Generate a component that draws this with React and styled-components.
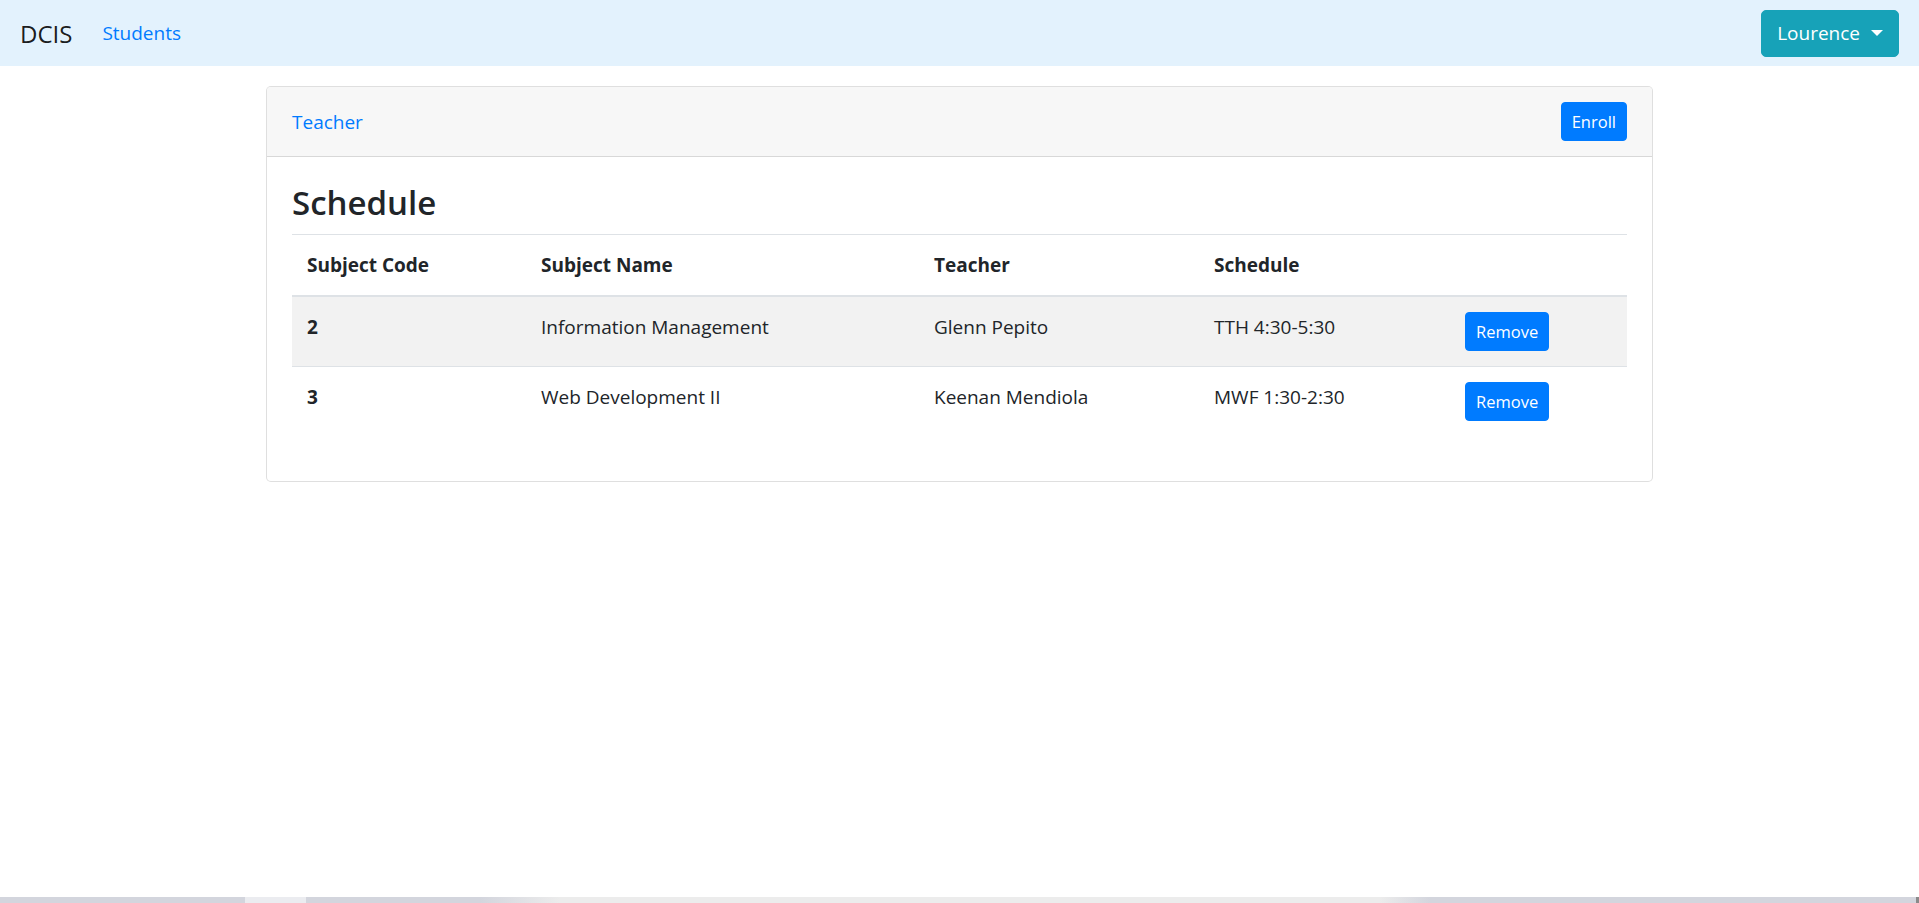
import styled, { createGlobalStyle } from "styled-components";

const GlobalStyle = createGlobalStyle`
  * { box-sizing: border-box; }
  body {
    margin: 0;
    font-family: "Open Sans", "Noto Sans", sans-serif;
    font-size: 19px;
    line-height: 30px;
    color: #212529;
    background: #fff;
  }
`;

const Page = styled.div`
  min-height: 100vh;
  display: flex;
  flex-direction: column;
`;

const Navbar = styled.nav`
  height: 66px;
  padding: 0 20px;
  display: flex;
  align-items: center;
  justify-content: space-between;
  background-color: #e3f2fd;
`;

const NavLeft = styled.div`
  display: flex;
  align-items: center;
`;

const Brand = styled.a`
  font-size: 24px;
  line-height: 37px;
  color: rgba(0, 0, 0, 0.9);
  margin-right: 20px;
  text-decoration: none;
`;

const NavLink = styled.a`
  padding: 0 10px;
  color: #007bff;
  text-decoration: none;
`;

const Button = styled.button`
  font-family: inherit;
  color: #fff;
  background-color: ${(p) => (p.$variant === "info" ? "#17a2b8" : "#007bff")};
  border: 1px solid ${(p) => (p.$variant === "info" ? "#17a2b8" : "#007bff")};
  font-size: ${(p) => (p.$small ? "16.5px" : "19px")};
  line-height: ${(p) => (p.$small ? "27px" : "30px")};
  padding: ${(p) => (p.$small ? "5px 10px" : "7.5px 15px")};
  border-radius: ${(p) => (p.$small ? "4px" : "5px")};
  cursor: pointer;
  display: inline-flex;
  align-items: center;
`;

const Caret = styled.span`
  display: inline-block;
  margin-left: 11px;
  border-top: 6px solid #fff;
  border-left: 6px solid transparent;
  border-right: 6px solid transparent;
`;

const Container = styled.main`
  width: 1387px;
  margin: 20px auto 0;
`;

const Card = styled.section`
  border: 1px solid rgba(0, 0, 0, 0.125);
  border-radius: 5px;
  background: #fff;
`;

const CardHeader = styled.header`
  display: flex;
  align-items: center;
  justify-content: space-between;
  padding: 15px 25px;
  background-color: #f7f7f7;
  border-bottom: 1px solid rgba(0, 0, 0, 0.125);
  border-radius: 4px 4px 0 0;
`;

const CardLink = styled.a`
  color: #007bff;
  text-decoration: none;
`;

const CardBody = styled.div`
  padding: 25px;
`;

const Title = styled.h3`
  font-size: 33px;
  font-weight: 600;
  line-height: 42px;
  margin: 0 0 10px;
`;

const Table = styled.table`
  width: 100%;
  border-collapse: collapse;
  margin-bottom: 20px;
`;

const Th = styled.th`
  text-align: left;
  vertical-align: bottom;
  padding: 15px;
  border-top: 1px solid #dee2e6;
  border-bottom: 2px solid #dee2e6;
  width: ${(p) => p.$w || "auto"};
`;

const Row = styled.tr`
  background-color: ${(p) => (p.$striped ? "#f2f2f2" : "transparent")};
`;

const Td = styled.td`
  padding: 15px;
  vertical-align: top;
  border-top: 1px solid #dee2e6;
  font-weight: ${(p) => (p.$bold ? 700 : 400)};
`;

const ScrollStrip = styled.div`
  margin-top: auto;
  height: 6px;
  background: linear-gradient(
    to right,
    #d3d5dd 0px,
    #d3d5dd 245px,
    #ebecf0 245px,
    #ebecf0 306px,
    #d3d5dd 306px,
    #d3d5dd 480px,
    #ececec 560px,
    #ececec 1380px,
    #d3d5dd 1430px,
    #d3d5dd 1916px,
    #8a8a8a 1916px
  );
`;

const rows = [
  { code: "2", name: "Information Management", teacher: "Glenn Pepito", sched: "TTH 4:30-5:30" },
  { code: "3", name: "Web Development II", teacher: "Keenan Mendiola", sched: "MWF 1:30-2:30" },
];

export default function App() {
  return (
    <Page>
      <GlobalStyle />
      <Navbar>
        <NavLeft>
          <Brand>DCIS</Brand>
          <NavLink>Students</NavLink>
        </NavLeft>
        <Button $variant="info">
          Lourence
          <Caret />
        </Button>
      </Navbar>

      <Container>
        <Card>
          <CardHeader>
            <CardLink>Teacher</CardLink>
            <Button $small>Enroll</Button>
          </CardHeader>
          <CardBody>
            <Title>Schedule</Title>
            <Table>
              <thead>
                <tr>
                  <Th $w="234px">Subject Code</Th>
                  <Th $w="393px">Subject Name</Th>
                  <Th $w="280px">Teacher</Th>
                  <Th $w="251px">Schedule</Th>
                  <Th></Th>
                </tr>
              </thead>
              <tbody>
                {rows.map((r, i) => (
                  <Row key={r.code} $striped={i % 2 === 0}>
                    <Td $bold>{r.code}</Td>
                    <Td>{r.name}</Td>
                    <Td>{r.teacher}</Td>
                    <Td>{r.sched}</Td>
                    <Td>
                      <Button $small>Remove</Button>
                    </Td>
                  </Row>
                ))}
              </tbody>
            </Table>
          </CardBody>
        </Card>
      </Container>

      <ScrollStrip />
    </Page>
  );
}
